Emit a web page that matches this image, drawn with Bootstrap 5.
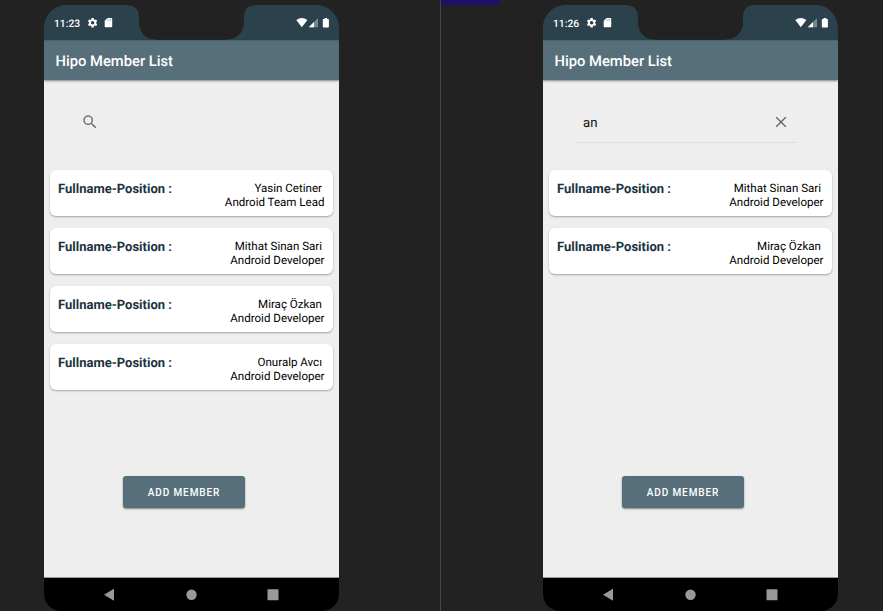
<!DOCTYPE html>
<html lang="en">
<head>
<meta charset="utf-8">
<meta name="viewport" content="width=device-width, initial-scale=1">
<title>Hipo Member List</title>
<link href="https://cdn.jsdelivr.net/npm/bootstrap@5.3.0/dist/css/bootstrap.min.css" rel="stylesheet">
<style>
body{background:#222;font-family:Roboto,sans-serif;height:611px;color:#111;text-rendering:geometricPrecision}
.pane-left{width:441px;padding:5px 0 0 44px;border-right:1px solid #444}
.pane-right{width:442px;padding:5px 0 0 102px}
.tab-mark{left:441px;top:0;width:58px;height:5px;background:#1d106b}
.phone{width:295px;height:606px;border-radius:0 0 17px 17px;white-space:nowrap}
.status{height:35px}
.appbar{height:40px;background:#566f7a;color:#fff;font-size:14.750px;font-weight:500;padding:1.500px 0 0 11.5px;border-top:1px solid #4a636e;box-shadow:0 1px 2px rgba(0,0,0,.45)}
.screen{background:#eee;border-bottom:1px solid #999;padding:0 6px}
.search{height:63px;margin:0 36px 27px 28px;border-bottom:1px solid transparent;padding:0 9px 0 3px;font-size:13.2px}
.search.open{border-color:#dedede;padding-left:6px}
.search svg{margin-top:22px}
.search span{margin-top:26px}
.member{height:46px;margin-bottom:12px;border:0;border-radius:6px;padding:10px 8.5px 0 8px;box-shadow:0 1px 2px rgba(0,0,0,.32)}
.member-label{font-size:13px;line-height:18px;padding-top:.6px;font-weight:700;color:#1b333e}
.member-info{font-size:11.550px;line-height:13.600px;color:#000;padding-top:2px}
.member-name{padding-right:2.500px}
.btn-add,.btn-add:hover{width:122px;height:32px;margin:auto 0 69px 73px;background:#566f7a;color:#fff;font-size:10px;font-weight:500;letter-spacing:.9px;border:0;border-radius:3px;padding:0;box-shadow:0 1px 2px rgba(0,0,0,.45)}
.softkeys{height:33px;background:#000}
</style>
</head>
<body class="d-flex overflow-hidden position-relative">
<svg class="d-none">
  <symbol id="shape" viewBox="0 0 295 35">
    <path fill="#2b424d" d="M0 35V23C0 10 10 0 23 0H83Q95 0 95 12V16Q95.500 34 113 34.500H181Q199.500 34 200 16V12Q200 0 211 0H272C285 0 295 10 295 23V35Z"/>
    <path fill="#222" d="M95 0V16Q95.500 34 113 34.500H181Q199.500 34 200 16V12Q200 0 211 0H83Q95 0 95 12Z"/>
    <g fill="#fff" transform="translate(42.700 11.900) scale(.49)"><path d="M19.140 12.940c.04-.3.060-.61.060-.94s-.02-.64-.07-.94l2.030-1.580c.18-.14.230-.41.120-.61l-1.920-3.320c-.12-.22-.37-.29-.59-.22l-2.390.96c-.5-.38-1.030-.7-1.620-.94l-.36-2.540c-.04-.24-.24-.41-.48-.41h-3.840c-.24 0-.43.170-.47.410l-.36 2.540c-.59.240-1.130.57-1.620.94l-2.390-.96c-.22-.08-.47 0-.59.220L2.740 8.870c-.12.210-.08.470.12.610l2.030 1.580c-.05.300-.09.630-.09.940s.02.640.070.940l-2.030 1.580c-.18.140-.23.410-.12.610l1.920 3.320c.12.220.37.290.59.220l2.390-.96c.5.380 1.030.7 1.620.94l.36 2.540c.05.240.24.410.48.410h3.840c.24 0 .44-.17.470-.41l.36-2.540c.59-.24 1.130-.56 1.620-.94l2.390.96c.22.080.47 0 .59-.22l1.920-3.320c.12-.22.070-.47-.12-.61zM12 15.600A3.600 3.600 0 1 1 12 8.400a3.600 3.600 0 0 1 0 7.200z"/></g>
    <path fill="#fff" d="M63.500 13h4q.7 0 .7.700v7.800q0 .7-.7.700h-6.100q-.7 0-.7-.7v-5.700Z"/>
    <path stroke="#2b424d" stroke-width=".35" d="M63.700 14v1.700M65.100 14v1.700M66.500 14v1.700"/>
    <path fill="#fff" d="M252.300 15Q257.800 11 263.400 15L257.800 22.300Z"/>
    <path fill="#75868e" d="M274 13V22.200H264.800Z"/><path fill="#fff" d="M270 17V22.200H264.800Z"/>
    <path fill="#fff" d="M280.500 13h2.700v1h1q.7 0 .7.700v7q0 .7-.7.700h-4.700q-.7 0-.7-.7v-7q0-.7.700-.7h1Z"/>
  </symbol>
  <symbol id="keys" viewBox="0 0 295 33"><g fill="#999"><path d="M60 16.800L70 10.800V22.800Z"/><circle cx="147.500" cy="16.800" r="5.200"/><rect x="223.500" y="11.300" width="11" height="11" rx=".5"/></g></symbol>
</svg>
<div class="tab-mark position-absolute"></div>

<section class="pane-left flex-shrink-0">
  <main class="phone d-flex flex-column overflow-hidden">
    <div class="status flex-shrink-0"><svg class="d-block" width="295" height="35" viewBox="0 0 295 35"><use href="#shape"/><text x="10" y="21.500" font-size="10.300" font-weight="500" fill="#fff">11:23</text></svg></div>
    <header class="appbar d-flex align-items-center flex-shrink-0 position-relative">Hipo Member List</header>
    <div class="screen d-flex flex-column flex-grow-1">
      <div class="search d-flex align-items-center"><svg width="18" height="18" viewBox="0 0 24 24" fill="#707070"><path d="M15.500 14h-.79l-.28-.27A6.500 6.500 0 1 0 13.730 14.430l.27.28v.79l5 4.990L20.490 19zm-6 0a4.500 4.500 0 1 1 0-9 4.500 4.500 0 0 1 0 9z"/></svg></div>
      <article class="member card flex-row justify-content-between"><div class="member-label">Fullname-Position :</div><div class="member-info text-end"><div class="member-name">Yasin Cetiner</div><div>Android Team Lead</div></div></article>
      <article class="member card flex-row justify-content-between"><div class="member-label">Fullname-Position :</div><div class="member-info text-end"><div class="member-name">Mithat Sinan Sari</div><div>Android Developer</div></div></article>
      <article class="member card flex-row justify-content-between"><div class="member-label">Fullname-Position :</div><div class="member-info text-end"><div class="member-name">Miraç Özkan</div><div>Android Developer</div></div></article>
      <article class="member card flex-row justify-content-between"><div class="member-label">Fullname-Position :</div><div class="member-info text-end"><div class="member-name">Onuralp Avcı</div><div>Android Developer</div></div></article>
      <button class="btn btn-add">ADD MEMBER</button>
    </div>
    <nav class="softkeys flex-shrink-0"><svg class="d-block" width="295" height="33"><use href="#keys"/></svg></nav>
  </main>
</section>

<section class="pane-right flex-shrink-0">
  <main class="phone d-flex flex-column overflow-hidden">
    <div class="status flex-shrink-0"><svg class="d-block" width="295" height="35" viewBox="0 0 295 35"><use href="#shape"/><text x="10" y="21.500" font-size="10.300" font-weight="500" fill="#fff">11:26</text></svg></div>
    <header class="appbar d-flex align-items-center flex-shrink-0 position-relative">Hipo Member List</header>
    <div class="screen d-flex flex-column flex-grow-1">
      <div class="search open d-flex align-items-center justify-content-between"><span>an</span><svg width="12" height="12" viewBox="0 0 12 12" stroke="#606060" stroke-width="1.300"><path d="M1.200 1.200L10.800 10.800M10.800 1.200L1.200 10.800"/></svg></div>
      <article class="member card flex-row justify-content-between"><div class="member-label">Fullname-Position :</div><div class="member-info text-end"><div class="member-name">Mithat Sinan Sari</div><div>Android Developer</div></div></article>
      <article class="member card flex-row justify-content-between"><div class="member-label">Fullname-Position :</div><div class="member-info text-end"><div class="member-name">Miraç Özkan</div><div>Android Developer</div></div></article>
      <button class="btn btn-add">ADD MEMBER</button>
    </div>
    <nav class="softkeys flex-shrink-0"><svg class="d-block" width="295" height="33"><use href="#keys"/></svg></nav>
  </main>
</section>
<script src="https://cdn.jsdelivr.net/npm/bootstrap@5.3.0/dist/js/bootstrap.bundle.min.js"></script>
</body>
</html>
